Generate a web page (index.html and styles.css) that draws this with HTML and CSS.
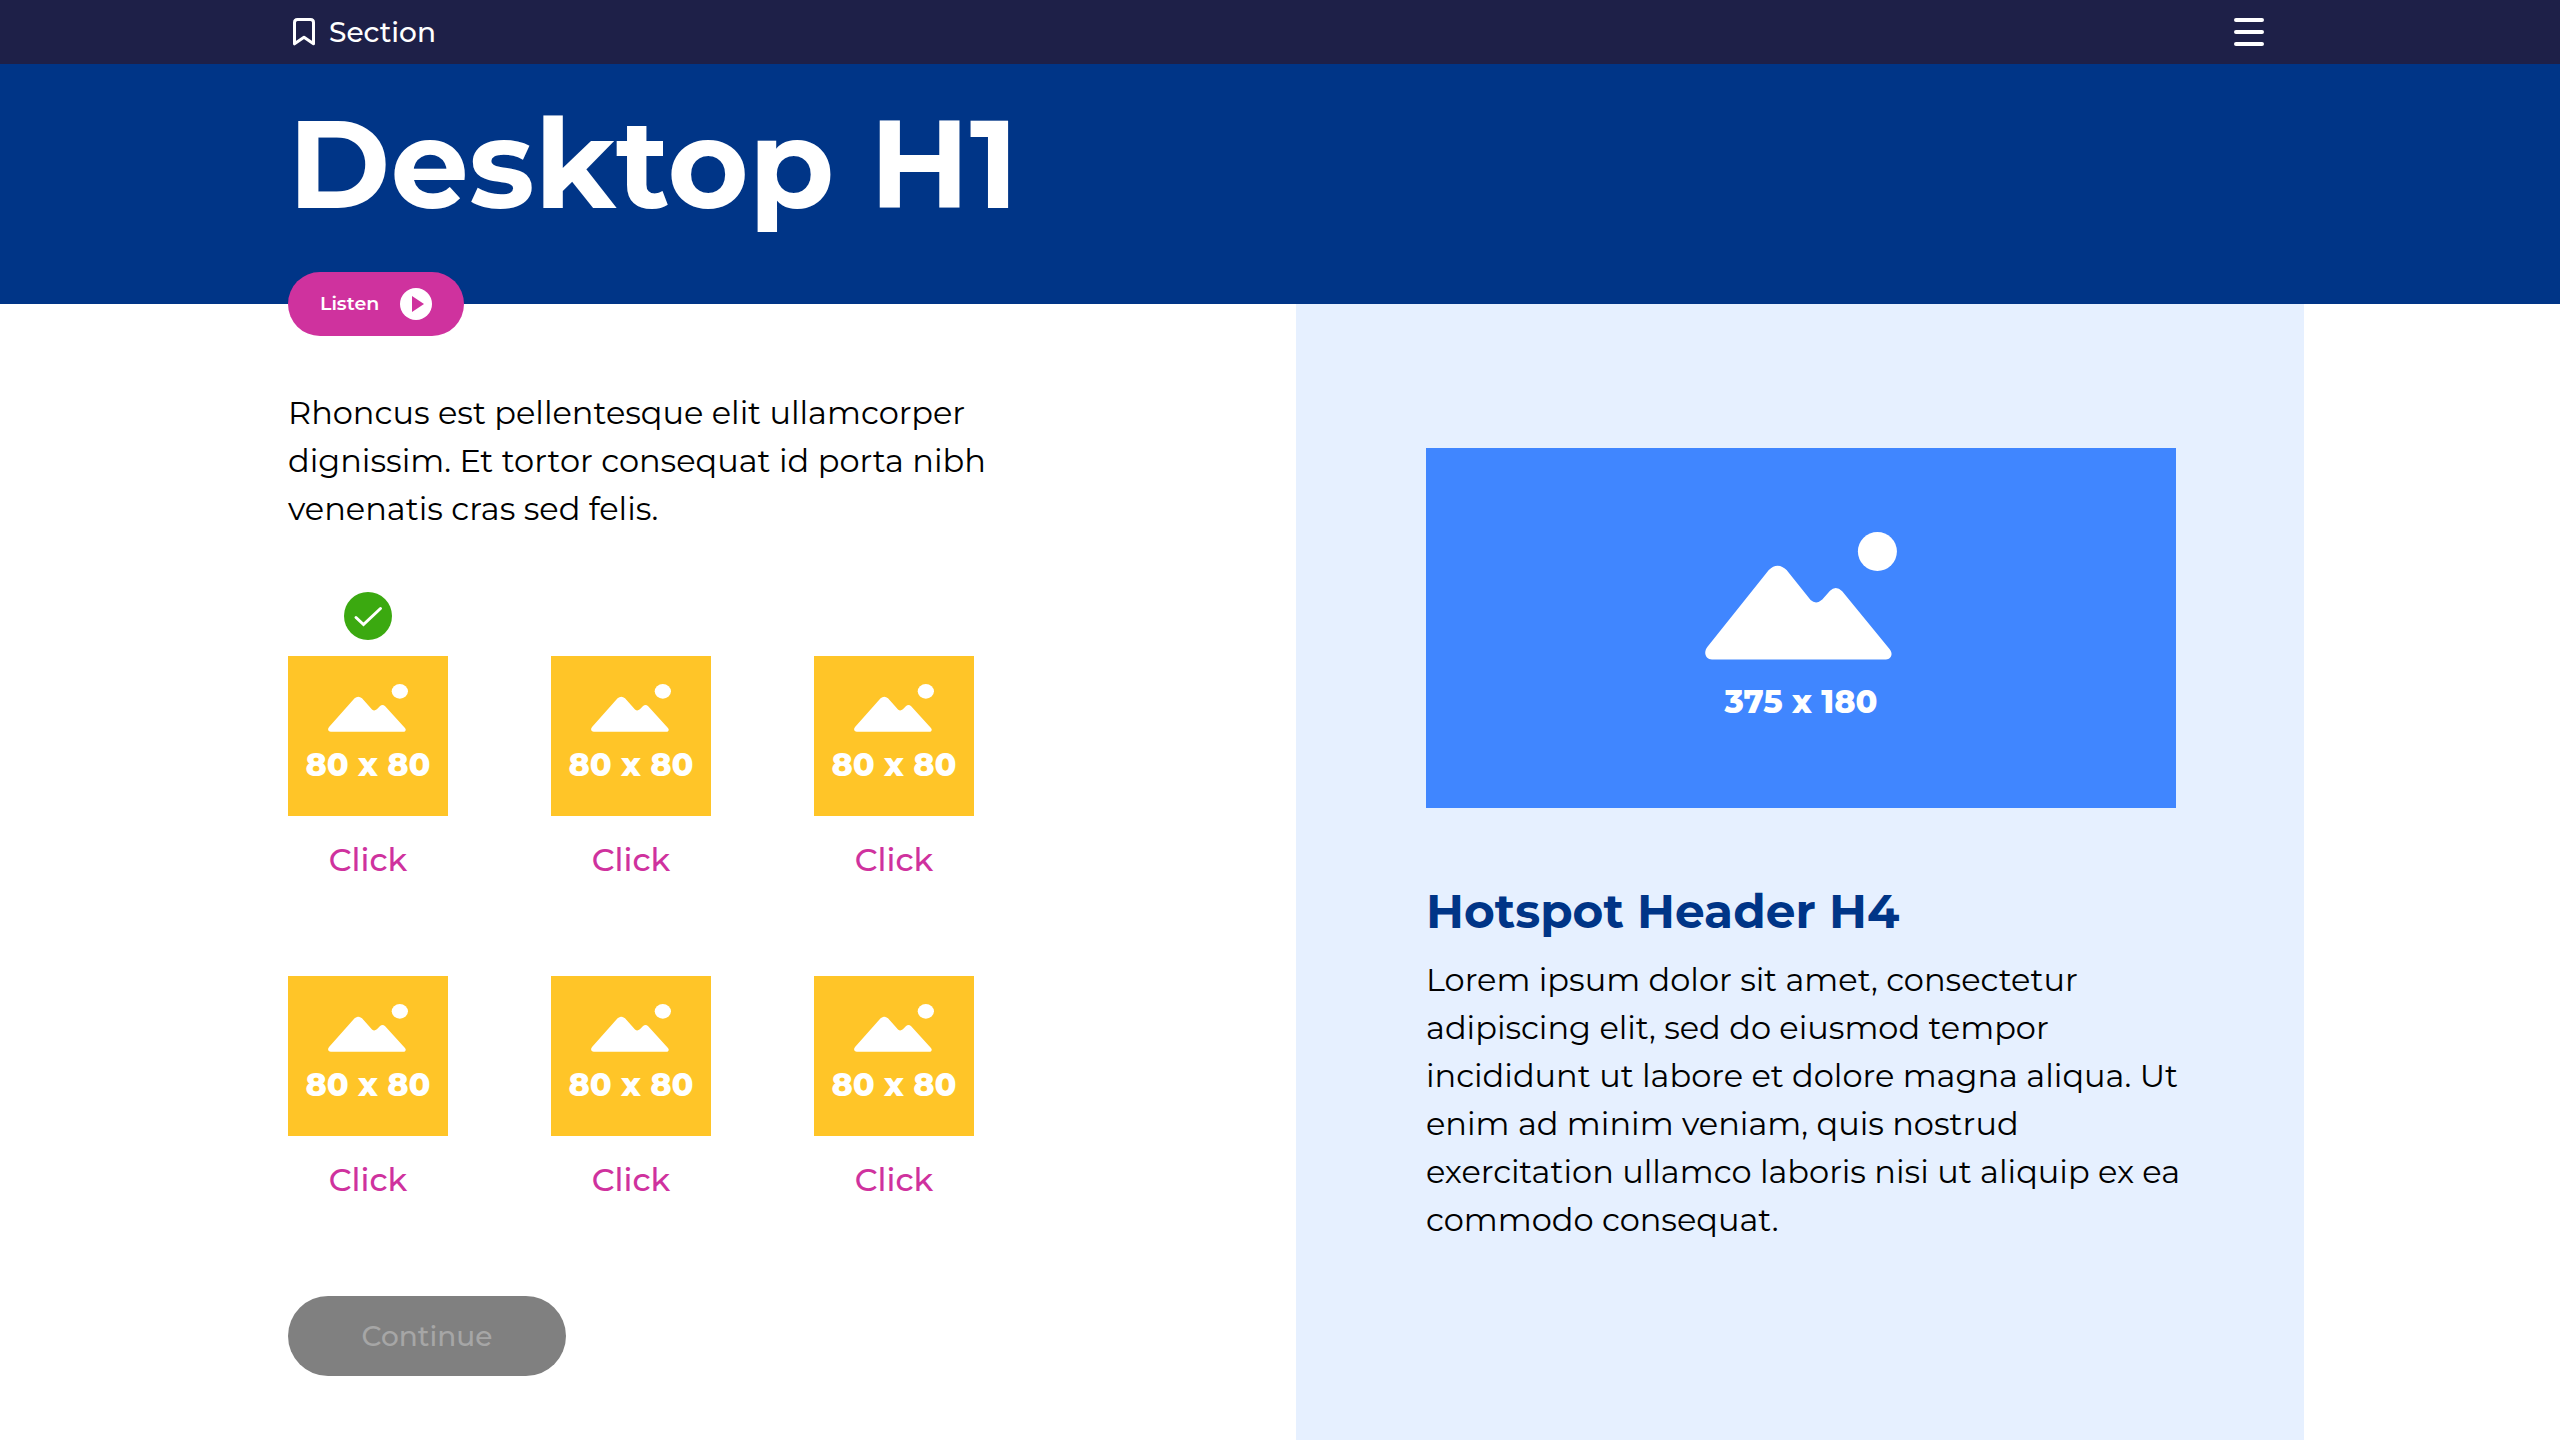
FILE: index.html
```html
<!DOCTYPE html>
<html lang="en">
<head>
<meta charset="utf-8">
<meta name="viewport" content="width=device-width, initial-scale=1">
<title>Desktop H1</title>
<link rel="stylesheet" href="styles.css">
</head>
<body>
<svg class="sprite" aria-hidden="true">
  <symbol id="picture" viewBox="0 0 192 128" preserveAspectRatio="none">
    <circle cx="172.4" cy="19.5" r="19.5"/>
    <path d="M2.5 114.7 63.8 38Q72.5 29.500 81.600 38L105.600 68Q111.200 73 117.300 67.500L125 58.700Q131 53.200 137.200 59.300L184.700 117.300C188.500 122 186 127.500 181 127.500H7C0.500 127.500-2 120.500 2.500 114.700Z"/>
  </symbol>
</svg>

<header class="topbar">
  <a class="section-link" href="#section">
    <svg class="bookmark" viewBox="0 0 22 28" aria-hidden="true"><path d="M1.500 25.800V4.500Q1.500 1.500 4.500 1.500H17.500Q20.500 1.500 20.500 4.500V25.800L11 19.200Z"/></svg>
    Section
  </a>
  <button class="menu" type="button" aria-label="Menu">
    <svg viewBox="0 0 30 28" aria-hidden="true"><path d="M2 2H28M2 14H28M2 26H28"/></svg>
  </button>
</header>

<div class="hero">
  <h1>Desktop H1</h1>
  <button class="listen" type="button">
    Listen
    <svg viewBox="0 0 32 32" aria-hidden="true"><circle cx="16" cy="16" r="16"/><path d="M12 8 24 16 12 24Z"/></svg>
  </button>
</div>

<main class="content" id="section">
  <section class="lesson">
    <p class="intro">Rhoncus est pellentesque elit ullamcorper dignissim. Et tortor consequat id porta nibh venenatis cras sed felis.</p>
    <div class="tiles">
      <button class="tile" type="button">
        <svg class="done" viewBox="0 0 48 48" role="img" aria-label="Completed"><circle cx="24" cy="24" r="24"/><path d="M12 25.500 19.500 32.500 36.500 16.500"/></svg>
        <span class="thumb"><svg aria-hidden="true"><use href="#picture"/></svg><span>80 x 80</span></span>
        <span class="caption">Click</span>
      </button>
      <button class="tile" type="button">
        <span class="thumb"><svg aria-hidden="true"><use href="#picture"/></svg><span>80 x 80</span></span>
        <span class="caption">Click</span>
      </button>
      <button class="tile" type="button">
        <span class="thumb"><svg aria-hidden="true"><use href="#picture"/></svg><span>80 x 80</span></span>
        <span class="caption">Click</span>
      </button>
      <button class="tile" type="button">
        <span class="thumb"><svg aria-hidden="true"><use href="#picture"/></svg><span>80 x 80</span></span>
        <span class="caption">Click</span>
      </button>
      <button class="tile" type="button">
        <span class="thumb"><svg aria-hidden="true"><use href="#picture"/></svg><span>80 x 80</span></span>
        <span class="caption">Click</span>
      </button>
      <button class="tile" type="button">
        <span class="thumb"><svg aria-hidden="true"><use href="#picture"/></svg><span>80 x 80</span></span>
        <span class="caption">Click</span>
      </button>
    </div>
    <button class="continue" type="button" disabled>Continue</button>
  </section>

  <aside class="hotspot">
    <div class="figure"><svg aria-hidden="true"><use href="#picture"/></svg><span>375 x 180</span></div>
    <h4>Hotspot Header H4</h4>
    <p>Lorem ipsum dolor sit amet, consectetur adipiscing elit, sed do eiusmod tempor incididunt ut labore et dolore magna aliqua. Ut enim ad minim veniam, quis nostrud exercitation ullamco laboris nisi ut aliquip ex ea commodo consequat.</p>
  </aside>
</main>
</body>
</html>
```
FILE: styles.css
```css
:root {
  --navy: #1e2048;
  --blue: #003587;
  --pink: #cf329e;
  --gutter-left: 11.25%;
  --gutter-right: 10%;
}

* {
  box-sizing: border-box;
}

body {
  display: flex;
  flex-direction: column;
  min-height: 100vh;
  margin: 0;
  background: #fff;
  color: #000;
  font-family: Gotham, Montserrat, Inter, sans-serif;
  font-size: 32px;
  line-height: 48px;
}

h1,
h4,
p {
  margin: 0;
}

button {
  padding: 0;
  border: 0;
  background: none;
  color: inherit;
  font: inherit;
  cursor: pointer;
}

svg {
  display: block;
  flex: none;
}

.sprite {
  position: absolute;
  width: 0;
  height: 0;
}

.topbar {
  display: flex;
  align-items: center;
  justify-content: space-between;
  height: 64px;
  padding: 0 var(--gutter-right) 0 var(--gutter-left);
  background: var(--navy);
  color: #fff;
}

.section-link {
  display: flex;
  align-items: center;
  gap: 14px;
  padding-left: 5px;
  color: inherit;
  font-size: 28px;
  font-weight: 500;
  text-decoration: none;
}

.bookmark {
  width: 22px;
  height: 28px;
  fill: none;
  stroke: currentColor;
  stroke-width: 3;
  stroke-linejoin: round;
}

.menu {
  margin-right: 40px;
}

.menu svg {
  width: 30px;
  height: 28px;
  stroke: currentColor;
  stroke-width: 4;
  stroke-linecap: round;
}

.hero {
  display: flex;
  flex-direction: column;
  align-items: flex-start;
  justify-content: space-between;
  height: 240px;
  padding: 20px var(--gutter-right) 0 var(--gutter-left);
  background: var(--blue);
  color: #fff;
}

h1 {
  font-size: 124px;
  font-weight: 700;
  line-height: 160px;
}

.listen {
  display: flex;
  align-items: center;
  justify-content: space-between;
  width: 176px;
  height: 64px;
  margin-bottom: -32px;
  padding: 0 32px;
  border-radius: 32px;
  background: var(--pink);
  font-size: 19px;
  font-weight: 600;
  z-index: 1;
}

.listen svg {
  width: 32px;
  height: 32px;
  fill: #fff;
}

.listen path {
  fill: var(--pink);
}

.content {
  display: grid;
  flex: 1;
  grid-template-columns: 1fr 1fr;
  padding: 0 var(--gutter-right) 0 var(--gutter-left);
}

.lesson {
  padding: 85px 0 64px;
}

.intro {
  max-width: 704px;
}

.tiles {
  display: grid;
  grid-template-columns: repeat(3, 160px);
  justify-content: space-between;
  align-items: end;
  row-gap: 92px;
  max-width: 686px;
  margin-top: 59px;
}

.tile {
  display: flex;
  flex-direction: column;
  align-items: center;
}

.done {
  width: 48px;
  height: 48px;
  margin-bottom: 16px;
  fill: #3ba910;
}

.done path {
  fill: none;
  stroke: #fff;
  stroke-width: 3;
  stroke-linecap: round;
}

.thumb,
.figure {
  display: flex;
  flex-direction: column;
  align-items: center;
  color: #fff;
  font-size: 32px;
  font-weight: 800;
}

.thumb {
  width: 160px;
  height: 160px;
  padding-top: 28px;
  background: #ffc528;
  line-height: 66px;
}

.thumb svg {
  width: 80px;
  height: 48px;
  fill: currentColor;
}

.caption {
  margin-top: 20px;
  color: var(--pink);
  font-weight: 500;
}

.continue {
  display: block;
  width: 278px;
  height: 80px;
  margin-top: 92px;
  border-radius: 40px;
  background: #808080;
  color: #a6a6a6;
  font-size: 28px;
  font-weight: 500;
}

.hotspot {
  padding: 144px 128px 64px 130px;
  background: #e6f0ff;
}

.hotspot p {
  margin-right: -16px;
}

.figure {
  height: 360px;
  padding-top: 84px;
  background: #4086ff;
  line-height: 84px;
}

.figure svg {
  width: 192px;
  height: 128px;
  fill: currentColor;
}

h4 {
  margin: 72px 0 12px;
  color: var(--blue);
  font-size: 47px;
  font-weight: 700;
  line-height: 64px;
}
```
